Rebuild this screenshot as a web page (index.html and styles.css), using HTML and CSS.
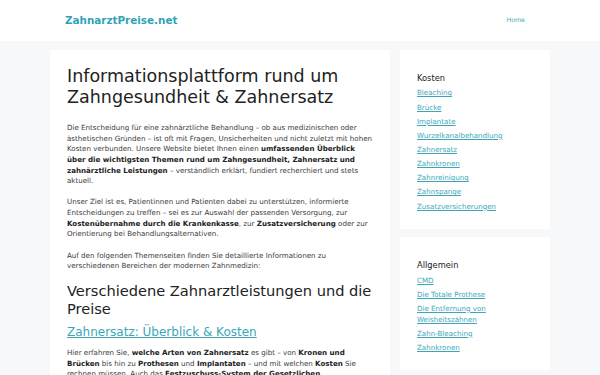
FILE: index.html
```html
<!DOCTYPE html>
<html>
<head>
    <title>ZahnarztPreise.net</title>
    <link rel="stylesheet" href="styles.css">
</head>
<body>
    <header class="site-header">
        <div class="header-inner">
            <a class="site-title" href="#">ZahnarztPreise.net</a>
            <nav class="main-nav">
                <a href="#">Home</a>
            </nav>
        </div>
    </header>

    <div class="site-content">
        <main class="content-card">
            <h1>Informationsplattform rund um Zahngesundheit &amp; Zahnersatz</h1>
            <div class="entry-content">
                <p>Die Entscheidung für eine zahnärztliche Behandlung – ob aus medizinischen oder ästhetischen Gründen – ist oft mit Fragen, Unsicherheiten und nicht zuletzt mit hohen Kosten verbunden. Unsere Website bietet Ihnen einen <strong>umfassenden Überblick über die wichtigsten Themen rund um Zahngesundheit, Zahnersatz und zahnärztliche Leistungen</strong> – verständlich erklärt, fundiert recherchiert und stets aktuell.</p>
                <p>Unser Ziel ist es, Patientinnen und Patienten dabei zu unterstützen, informierte Entscheidungen zu treffen – sei es zur Auswahl der passenden Versorgung, zur <strong>Kostenübernahme durch die Krankenkasse</strong>, zur <strong>Zusatzversicherung</strong> oder zur Orientierung bei Behandlungsalternativen.</p>
                <p>Auf den folgenden Themenseiten finden Sie detaillierte Informationen zu verschiedenen Bereichen der modernen Zahnmedizin:</p>
                <h2>Verschiedene Zahnarztleistungen und die Preise</h2>
                <h3><a href="#">Zahnersatz: Überblick &amp; Kosten</a></h3>
                <p>Hier erfahren Sie, <strong>welche Arten von Zahnersatz</strong> es gibt – von <strong>Kronen und Brücken</strong> bis hin zu <strong>Prothesen</strong> und <strong>Implantaten</strong> – und mit welchen <strong>Kosten</strong> Sie rechnen müssen. Auch das <strong>Festzuschuss-System der Gesetzlichen Krankenkassen</strong> wird erklärt.</p>
            </div>
        </main>

        <aside class="sidebar">
            <div class="widget">
                <h4 class="widget-title">Kosten</h4>
                <ul>
                    <li><a href="#">Bleaching</a></li>
                    <li><a href="#">Brücke</a></li>
                    <li><a href="#">Implantate</a></li>
                    <li><a href="#">Wurzelkanalbehandlung</a></li>
                    <li><a href="#">Zahnersatz</a></li>
                    <li><a href="#">Zahnkronen</a></li>
                    <li><a href="#">Zahnreinigung</a></li>
                    <li><a href="#">Zahnspange</a></li>
                    <li><a href="#">Zusatzversicherungen</a></li>
                </ul>
            </div>
            <div class="widget">
                <h4 class="widget-title">Allgemein</h4>
                <ul>
                    <li><a href="#">CMD</a></li>
                    <li><a href="#">Die Totale Prothese</a></li>
                    <li><a href="#">Die Entfernung von Weisheitszähnen</a></li>
                    <li><a href="#">Zahn-Bleaching</a></li>
                    <li><a href="#">Zahnkronen</a></li>
                </ul>
            </div>
        </aside>
    </div>
</body>
</html>
```

FILE: styles.css
```css
body {
    margin: 0;
    background-color: #f7f8f9;
    font-family: "DejaVu Sans", Verdana, sans-serif;
    font-size: 7.1px;
    line-height: 1.5;
    color: #3a3a3a;
}
a {
    color: #3aa7b9;
}
.site-header {
    background-color: #fff;
}
.header-inner {
    width: 500px;
    margin: 0 auto;
    height: 41px;
    padding: 0 25px 0 15px;
    box-sizing: border-box;
    display: flex;
    align-items: center;
    justify-content: space-between;
}
.site-title {
    font-size: 10.4px;
    font-weight: bold;
    color: #31a3b8;
    text-decoration: none;
}
.main-nav a {
    font-size: 6.3px;
    color: #3aa7b9;
    text-decoration: none;
}
.site-content {
    width: 500px;
    margin: 9px auto 0;
    display: flex;
    gap: 10px;
    align-items: flex-start;
}
.content-card {
    width: 340px;
    background-color: #fff;
    padding: 16px 17px;
    box-sizing: border-box;
}
h1 {
    font-size: 17.5px;
    font-weight: normal;
    line-height: 1.2;
    color: #222;
    margin: 0 0 15px;
}
.entry-content p {
    margin: 0 0 10.6px;
}
.entry-content strong {
    color: #222;
}
h2 {
    font-size: 14.6px;
    font-weight: normal;
    line-height: 1.2;
    color: #222;
    margin: 0 0 8px;
}
h3 {
    font-size: 12px;
    font-weight: normal;
    line-height: 1.2;
    margin: 0 0 8px;
}
.sidebar {
    width: 150px;
    display: flex;
    flex-direction: column;
    gap: 8px;
}
.widget {
    background-color: #fff;
    padding: 22px 17px 17px;
}
.widget-title {
    font-size: 8.3px;
    font-weight: normal;
    color: #222;
    margin: 0 0 4px;
}
.widget ul {
    list-style: none;
    margin: 0;
    padding: 0;
}
.widget li {
    font-size: 7.1px;
    line-height: 1.5;
    margin-bottom: 3.5px;
}
.widget li:last-child {
    margin-bottom: 0;
}
```
